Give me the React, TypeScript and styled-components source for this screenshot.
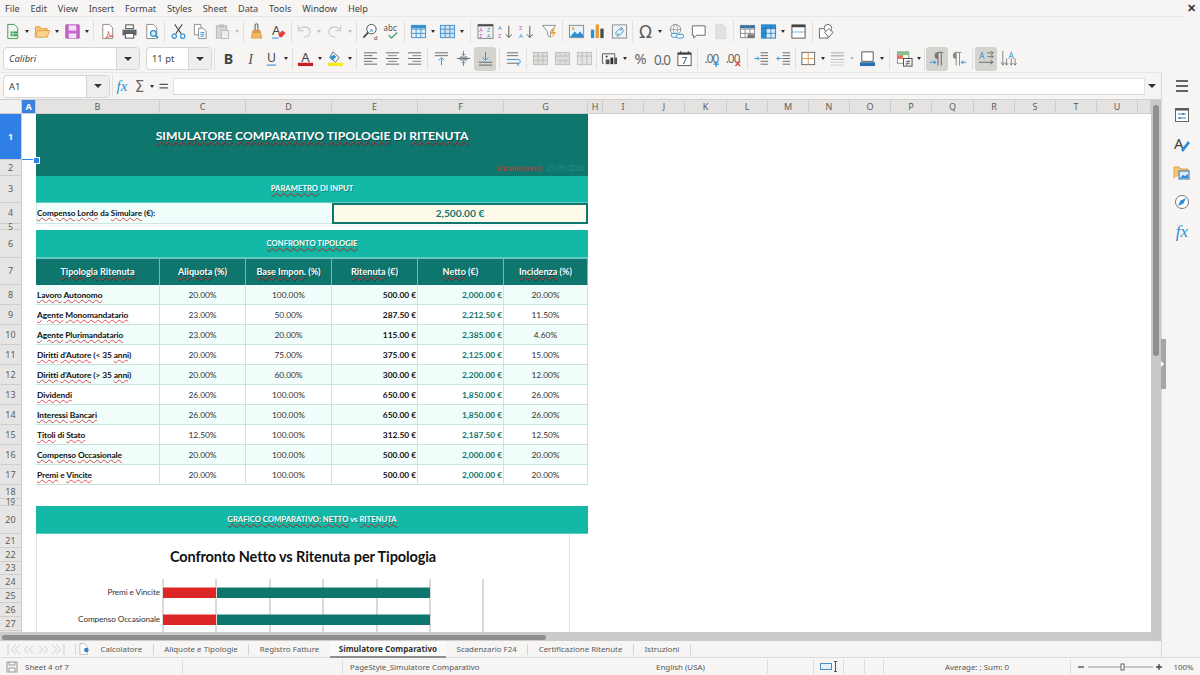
import React from "react";
import styled, { createGlobalStyle } from "styled-components";

const Global = createGlobalStyle`
  html, body { margin: 0; padding: 0; background: #f6f5f4; }
  * { box-sizing: border-box; }
  body { font-family: "Noto Sans", "Open Sans", sans-serif; }
`;

const Page = styled.div`
  width: 1200px; height: 675px; overflow: hidden; position: relative;
  display: flex; flex-direction: column; background: #f6f5f4; color: #3c3c3c;
`;
const MenuBar = styled.div`
  height: 17px; display: flex; align-items: center; padding: 0 5px; gap: 10.8px;
  font-size: 9.2px; color: #444; border-bottom: 1px solid #e9e8e6; margin-right: 16px; position: relative;
`;
const Close = styled.div`
  position: absolute; right: -12px; top: 1px; font-size: 11px; font-weight: 700; color: #333; line-height: 14px;
`;
const Toolbar = styled.div<{ $h: number; $pad: number }>`
  height: ${p => p.$h}px; padding-left: ${p => p.$pad}px; display: flex; align-items: center; flex: none;
`;
const Tool = styled.div<{ $w?: number; $active?: boolean }>`
  width: ${p => p.$w ?? 22}px; height: 24px; flex: none; display: flex; align-items: center; justify-content: center;
  border-radius: 3px; background: ${p => (p.$active ? "#d5d3d0" : "transparent")};
`;
const Drop = styled.div<{ $w?: number; $off?: boolean; $big?: boolean }>`
  width: ${p => p.$w ?? 8}px; flex: none; display: flex; justify-content: center;
  &::after {
    content: ""; border-left: ${p => (p.$big ? 4 : 2.5)}px solid transparent; border-right: ${p => (p.$big ? 4 : 2.5)}px solid transparent;
    border-top: ${p => (p.$big ? 4 : 3)}px solid ${p => (p.$off ? "#bdbdbd" : "#2e2e2e")};
  }
`;
const Sep = styled.div<{ $w?: number }>`
  width: ${p => p.$w ?? 5}px; height: 22px; flex: none; display: flex; justify-content: center;
  &::after { content: ""; width: 1px; background: #e2e1df; }
`;
const Combo = styled.div<{ $w: number; $btn: number; $italic?: boolean; $gap?: number }>`
  width: ${p => p.$w}px; height: 23px; flex: none; margin-right: ${p => p.$gap ?? 0}px;
  display: flex; border: 1px solid #d6d5d3; border-radius: 4px; background: #fff;
  font-size: 9.4px; color: #444; font-style: ${p => (p.$italic ? "italic" : "normal")};
  overflow: hidden;
  & > span { flex: 1; padding-left: 5px; line-height: 21px; }
  & > i {
    width: ${p => p.$btn}px; background: #efeeec; border-left: 1px solid #d6d5d3;
    display: flex; align-items: center; justify-content: center;
  }
  & > i::after {
    content: ""; border-left: 4px solid transparent; border-right: 4px solid transparent; border-top: 4px solid #333;
  }
`;
const Main = styled.div`
  flex: 1; display: flex; min-height: 0;
`;
const Work = styled.div`
  width: 1161px; display: flex; flex-direction: column; min-width: 0; position: relative;
`;
const FormulaBar = styled.div`
  height: 28px; flex: none; padding: 0 0 0 3px; display: flex; align-items: center;
  border-top: 1px solid #e8e7e5; border-bottom: 1px solid #d0cfcd;
`;
const FxInput = styled.div`
  width: 972px; height: 17px; background: #fff; border: 1px solid #e4e3e1; border-bottom-color: #d4d3d1; flex: none;
`;
const ColHeads = styled.div`
  height: 14px; flex: none; display: flex; background: #e4e3e1; border-bottom: 1px solid #cfcecc; margin-right: 10px;
`;
const Corner = styled.div`
  width: 22px; flex: none; background: #f2f1f0; border-right: 1px solid #cfcecc;
`;
const ColHead = styled.div<{ $w: number; $sel?: boolean }>`
  width: ${p => p.$w}px; flex: none; text-align: center; font-size: 9px; line-height: 13px;
  border-right: 1px solid #cfcecc;
  background: ${p => (p.$sel ? "#3b82e0" : "transparent")};
  color: ${p => (p.$sel ? "#fff" : "#5c5c5c")};
  font-weight: ${p => (p.$sel ? 700 : 400)};
`;
const Body = styled.div`
  height: 518px; flex: none; display: flex; overflow: hidden; position: relative; margin-right: 10px;
`;
const RowHeads = styled.div`
  width: 22px; flex: none; background: #e6e5e3; border-right: 1px solid #cfcecc;
`;
const RowHead = styled.div<{ $h: number; $sel?: boolean }>`
  height: ${p => p.$h}px; font-size: ${p => (p.$h < 10 ? 8 : 9)}px; line-height: ${p => p.$h - 1}px; text-align: center;
  border-bottom: 1px solid #d0cfcd;
  background: ${p => (p.$sel ? "#2f7fe6" : "transparent")};
  color: ${p => (p.$sel ? "#fff" : "#5c5c5c")};
  font-weight: ${p => (p.$sel ? 700 : 400)};
`;
const Canvas = styled.div`
  flex: 1; background: #fff; padding-left: 14px; position: relative; min-width: 0;
  font-family: "Lato", "Liberation Sans", sans-serif;
`;
const CellCursor = styled.div`
  position: absolute; left: 0; top: 45px; width: 14px; height: 1px; background: #2f7fe6; z-index: 2;
  &::after {
    content: ""; position: absolute; right: -4px; top: -2px; width: 5px; height: 5px; background: #2f7fe6; border: 1px solid #fff;
  }
`;
const Grid = styled.div`
  width: 552px; display: grid; position: relative;
  grid-template-columns: 124px 86px 86px 86px 86px 84px;
  grid-template-rows: 46px 16px 27px 21px 6px 28px 27px repeat(10, 20px) 14px 7px 28px;
`;
const Title = styled.div`
  grid-column: 1 / -1; background: #0f766e; color: #fff; font-size: 12.2px; font-weight: 700;
  text-align: center; line-height: 43px; text-shadow: 1px 1px 0 rgba(0, 0, 0, 0.35);
`;
const Subtitle = styled.div`
  grid-column: 1 / -1; background: #0f766e; display: flex; justify-content: flex-end; align-items: center;
  gap: 4px; padding-right: 3px; font-size: 7px; color: #2d8d83;
  & > b { color: #9a4a42; font-weight: 700; font-size: 7.4px; }
`;
const Band = styled.div`
  grid-column: 1 / -1; background: #14b8a6; color: #fff; font-size: 7.7px; font-weight: 700;
  text-align: center; display: flex; align-items: center; justify-content: center;
  border-bottom: 1px solid #5fcabd; text-shadow: 1px 1px 0 rgba(0, 0, 0, 0.3);
  padding-bottom: 2px;
`;
const Blank = styled.div`
  grid-column: 1 / -1;
`;
const InputLabel = styled.div`
  grid-column: 1 / 4; background: #f0fdfa; font-size: 8.1px; font-weight: 700; color: #111; padding: 0 0 1px 0;
  display: flex; align-items: center; border-bottom: 1px solid #cfe6e3; border-left: 1px solid #d9ecea;
`;
const InputValue = styled.div`
  grid-column: 4 / -1; background: #fffbeb; border: 2px solid #0f766e; color: #0f766e;
  font-size: 10.2px; font-weight: 700; display: flex; align-items: center; justify-content: center; padding-bottom: 1px;
`;
const Head = styled.div`
  background: #0f766e; color: #fff; font-size: 9.1px; font-weight: 700; display: flex; align-items: center; justify-content: center;
  border-right: 1px solid #7cb6ae; text-shadow: 1px 1px 0 rgba(0, 0, 0, 0.35);
  border-top: 1px solid #5fcabd; padding-bottom: 2px;
`;
const Cell = styled.div<{ $odd: boolean; $align?: string; $tone?: string }>`
  background: ${p => (p.$odd ? "#f0fdfa" : "#fff")};
  border-right: 1px solid #c8e4e0; border-bottom: 1px solid #c8e4e0;
  display: flex; align-items: center; padding: 0 1px 0 1px;
  justify-content: ${p => (p.$align === "right" ? "flex-end" : p.$align === "left" ? "flex-start" : "center")};
  font-size: 8.4px;
  font-weight: ${p => (p.$tone === "strong" || p.$tone === "name" || p.$tone === "teal" ? 700 : 400)};
  color: ${p => (p.$tone === "teal" ? "#0f766e" : p.$tone === "strong" || p.$tone === "name" ? "#111" : "#333")};
  letter-spacing: ${p => (p.$tone === "name" ? "-0.1px" : "0")};
`;
const Wavy = styled.span`
  text-decoration: underline wavy rgba(216, 35, 42, 0.8) 0.7px; text-underline-offset: 0.5px;
`;
const Chart = styled.div`
  position: absolute; left: 0; top: 420px; width: 534px; height: 98px; background: #fff;
  border-left: 1px solid #e3e3e3; border-right: 1px solid #e3e3e3;
`;
const ChartTitle = styled.div`
  font-size: 14.5px; font-weight: 700; color: #111; text-align: center; letter-spacing: -0.1px; padding-top: 14px; line-height: 18px; height: 45px;
`;
const VTrack = styled.div`
  position: absolute; right: 0; top: 28px; bottom: 17px; width: 10px; background: #c9c9c9;
  &::after {
    content: ""; position: absolute; left: 2px; top: 5px; width: 6px; height: 251px; border-radius: 3px; background: #8e8e8e;
  }
`;
const HScroll = styled.div`
  height: 9px; flex: none; background: #cbcbcb; position: relative; margin-right: 10px;
  &::before {
    content: ""; position: absolute; left: 2px; top: 3px; width: 544px; height: 5px; border-radius: 3px; background: #8e8e8e;
  }
`;
const Tabs = styled.div`
  height: 17px; flex: none; display: flex; align-items: center; font-size: 7.9px; color: #555;
  border-bottom: 1px solid #dcdbd9; padding-left: 7px;
`;
const TabNav = styled.div`
  width: 68px; flex: none; display: flex; align-items: center;
`;
const TabSep = styled.div`
  width: 1px; height: 11px; background: #d4d3d1; flex: none;
`;
const NewTab = styled.div`
  width: 11px; margin-left: 3px; flex: none; display: flex; align-items: center;
`;
const Tab = styled.div<{ $active?: boolean }>`
  padding: 0 ${p => (p.$active ? 9 : 10.5)}px; height: 17px; line-height: 16px; flex: none; white-space: nowrap;
  font-weight: ${p => (p.$active ? 700 : 400)};
  font-size: ${p => (p.$active ? 8.1 : 7.9)}px;
  color: ${p => (p.$active ? "#333" : "#5a5a5a")};
  border-bottom: ${p => (p.$active ? "2px solid #8f8f8f" : "none")};
  background: ${p => (p.$active ? "#fbfbfa" : "transparent")};
`;
const Sidebar = styled.div`
  flex: 1; display: flex; flex-direction: column; align-items: center; padding-top: 3px; gap: 8px;
  border-left: 1px solid #d8d7d5; border-bottom: 1px solid #dcdbd9; position: relative;
`;
const SideBtn = styled.div`
  width: 22px; height: 21px; display: flex; align-items: center; justify-content: center;
  padding-left: 1px;
`;
const Grip = styled.div`
  position: absolute; left: -1px; top: 267px; width: 5px; height: 50px; background: #a5a5a5;
  &::after {
    content: ""; position: absolute; left: 0; top: 22px; border-left: 3px solid #fff;
    border-top: 3px solid transparent; border-bottom: 3px solid transparent;
  }
`;
const Status = styled.div`
  height: 17px; flex: none; display: flex; align-items: center; font-size: 7.9px; color: #555;
`;
const StatusCell = styled.div<{ $w: number; $pad?: number; $center?: boolean; $line?: boolean }>`
  width: ${p => p.$w}px; flex: none; height: 14px; display: flex; align-items: center; white-space: nowrap; gap: 3px;
  padding-left: ${p => p.$pad ?? 0}px;
  justify-content: ${p => (p.$center ? "center" : "flex-start")};
  border-right: ${p => (p.$line ? "1px solid #dddcda" : "none")};
`;
const Menu = styled.span``;
const Vector = styled.svg`
  overflow: visible; flex: none;
`;

const BLUE = "#2a8fd6", DK = "#4a4a4a", GR = "#8a8a8a";
const txt = { fontFamily: "Noto Sans, sans-serif" };

const lines = (ys: number[], x1: number, x2: number, c = "#555", alt?: (i: number) => number) =>
  ys.map((y, i) => <path key={y} d={`M${x1} ${y}H${alt ? alt(i) : x2}`} stroke={c} strokeWidth="1" />);

const doc = (c: string, f = "#fff") => <path d="M4 1.5h7l3.5 3.5v11.5H4z" fill={f} stroke={c} />;
const gridIcon = (c: string, f = "#fff", head?: string) => (
  <>
    <rect x="1.5" y="2.5" width="15" height="13" fill={f} stroke={c} />
    {head && <rect x="1.5" y="2.5" width="15" height="3" fill={head} />}
    <path d="M6.5 2.5v13M11.5 2.5v13M1.5 6.5h15M1.5 11h15" stroke={c} strokeWidth="1" />
  </>
);

const icons: Record<string, React.ReactNode> = {
  new: (<>{doc("#3f9a52", "#eef7ef")}<rect x="7" y="9" width="7" height="5" fill="#3f9a52" /><path d="M9.5 9v5M7 11.5h7" stroke="#fff" strokeWidth=".7" /></>),
  open: (<><path d="M1.5 15V4h5l1.5 2h6v2" fill="#f7c877" stroke="#e0a044" /><path d="M1.5 15l2.5-7h12.5L14 15z" fill="#fbd48c" stroke="#e0a044" /></>),
  save: (<><path d="M2 2h14v14H2z" fill="#c766cc" stroke="#a94db0" /><rect x="5" y="2.5" width="8" height="5.5" fill="#f3e0f4" /><rect x="5" y="11" width="8" height="5" fill="#f3e0f4" /></>),
  pdf: (<>{doc(GR)}<path d="M7 16c2-1 3-5 3-7 0 3 2 5 5 5-3 0-6 1-8 2z" fill="none" stroke="#e2574c" /></>),
  print: (<><rect x="5" y="2" width="8" height="4" fill="#fff" stroke={DK} /><path d="M1.5 7h15v6h-15z" fill="#5d6a72" /><rect x="4.5" y="11" width="9" height="5" fill="#fff" stroke={DK} /></>),
  preview: (<>{doc(GR)}<circle cx="11" cy="11" r="3" fill="#dff0fb" stroke={BLUE} strokeWidth="1.3" /><path d="M13 13l3 3" stroke={BLUE} strokeWidth="1.5" /></>),
  cut: (<><path d="M5 1.5l7 10M13 1.5l-7 10" stroke={DK} strokeWidth="1.1" /><circle cx="4.5" cy="14" r="2.3" fill="none" stroke={BLUE} strokeWidth="1.2" /><circle cx="13.5" cy="14" r="2.3" fill="none" stroke={BLUE} strokeWidth="1.2" /></>),
  copy: (<><path d="M2.5 1.5h7v11h-7z" fill="#fff" stroke={GR} /><path d="M7 5.5h5l3 3v8H7z" fill="#fff" stroke={GR} /><path d="M9 10h4M9 12h4M9 14h4" stroke={BLUE} /></>),
  paste: (<><rect x="2.5" y="3" width="11" height="13" fill="#d5d5d3" stroke="#b5b5b3" /><rect x="5.5" y="1.5" width="5" height="3" fill="#bbb" /><rect x="8" y="8" width="7.5" height="8.5" fill="#eee" stroke="#bbb" /></>),
  clone: (<><rect x="7.5" y="1" width="3" height="7" rx="1" fill="none" stroke={DK} /><path d="M5 8h8v2H5z" fill="#e9a84c" stroke="#c8852c" strokeWidth=".6" /><path d="M4.5 10h9l1 6h-11z" fill="#f0b860" stroke="#d48e32" strokeWidth=".7" /></>),
  clear: (<><text x="2" y="13" fontSize="14" fill={DK} style={txt}>A</text><path d="M9 12l4-4 3.5 2.5-4 4.5H10z" fill="#e2403a" /><path d="M2 16h7" stroke={BLUE} /></>),
  undo: (<><path d="M3 7c3-4 11-4 12 2 .5 4-4 6-7 6" fill="none" stroke="#cfcfcd" strokeWidth="1.4" /><path d="M2.5 2.5v5.5h5.5" fill="none" stroke="#cfcfcd" strokeWidth="1.4" /></>),
  redo: (<><path d="M15 7C12 3 4 3 3 9c-.5 4 4 6 7 6" fill="none" stroke="#cfcfcd" strokeWidth="1.4" /><path d="M15.5 2.5v5.5H10" fill="none" stroke="#cfcfcd" strokeWidth="1.4" /></>),
  find: (<><circle cx="10" cy="6.5" r="5" fill="#fff" stroke={DK} /><path d="M6.5 10L1.5 15.5" stroke={DK} strokeWidth="1.8" /><text x="8" y="9" fontSize="6.5" fill={BLUE} style={txt}>a</text><text x="12.5" y="18" fontSize="6.5" fill={DK} style={txt}>d</text></>),
  spell: (<><text x="0.5" y="8.5" fontSize="8.5" fill="#555" style={txt}>abc</text><path d="M6 13l3 3 6-6" fill="none" stroke="#4aa96c" strokeWidth="1.5" /></>),
  table: gridIcon("#4a90c8", "#e3f1fb", "#2a8fd6"),
  cols: gridIcon("#4a90c8", "#cfe6f7"),
  sort: (<><rect x="1" y="1.5" width="16" height="15" fill="#f0f0f0" stroke={GR} /><rect x="1" y="1.5" width="16" height="2" fill={DK} /><text x="2.5" y="9" fontSize="5.4" fill="#b04fc0" style={txt}>A</text><text x="2.5" y="16" fontSize="5.4" fill="#b04fc0" style={txt}>Z</text><text x="10.5" y="9" fontSize="5.4" fill={BLUE} style={txt}>Z</text><text x="10.5" y="16" fontSize="5.4" fill={BLUE} style={txt}>A</text></>),
  asc: (<><text x="1" y="7" fontSize="6.2" fill={BLUE} style={txt}>A</text><text x="1" y="16" fontSize="6.2" fill="#c04fc8" style={txt}>Z</text><path d="M12.5 3v12M9.5 12l3 3.5 3-3.5" fill="none" stroke="#555" /></>),
  desc: (<><text x="1" y="7" fontSize="6.2" fill="#c04fc8" style={txt}>Z</text><text x="1" y="16" fontSize="6.2" fill={BLUE} style={txt}>A</text><path d="M12.5 3v12M9.5 12l3 3.5 3-3.5" fill="none" stroke="#555" /></>),
  filter: (<><path d="M1.5 2.5h14l-5.5 6.5v6l-3-2V9z" fill="#fff" stroke={GR} /><path d="M13 6l-3 5h3l-2 5 5-6.5h-3l2-3.5z" fill="#f0a030" /></>),
  image: (<><rect x="1.5" y="2.5" width="15" height="13" fill="#e8f3fb" stroke={GR} /><circle cx="5.5" cy="6" r="1.4" fill="#f0b040" /><path d="M2 15l5-6 3 3 3-3 3 4v2z" fill={BLUE} /></>),
  chart: (<><rect x="2" y="7" width="3.5" height="9" fill={BLUE} /><rect x="7" y="1.5" width="3.5" height="14.5" fill="#ee9a2e" /><rect x="12" y="6" width="3.5" height="10" fill={DK} /></>),
  pivot: (<><rect x="1.5" y="2" width="15" height="14" fill="#f2f2f2" stroke={GR} /><path d="M5 12c0-3 3-6 7-6M10 4l2 2-2 2M13 7c0 3-3 6-6 6M8 11l-2 2 2 2" fill="none" stroke={BLUE} /></>),
  omega: <text x="9" y="16" fontSize="18" textAnchor="middle" fill="#5c5c5c" style={{ fontFamily: "DejaVu Sans" }}>Ω</text>,
  link: (<><circle cx="8" cy="7" r="5.5" fill="none" stroke={GR} /><path d="M2.5 7h11M8 1.5c-3 3-3 8 0 11M8 1.5c3 3 3 8 0 11" stroke={GR} fill="none" strokeWidth=".7" /><rect x="3.5" y="11" width="7" height="4" rx="2" fill="#fff" stroke={BLUE} /><rect x="9" y="12" width="7.5" height="4" rx="2" fill="#fff" stroke={BLUE} /></>),
  comment: <path d="M2.5 3h13.5v10h-9L4 16v-3H2.5z" fill="#fff" stroke="#666" />,
  hf: (<>{doc("#d8d8d6", "#e2e2e0")}</>),
  printarea: (<>{gridIcon(GR, "#fff", "#2a6fa8")}<path d="M9 12h7v4H9z" fill="#777" /></>),
  freeze: (<><rect x="1.5" y="2" width="15" height="14" fill="#d6ebfa" stroke="#2f7fb8" /><rect x="1.5" y="2" width="5" height="14" fill="#2a8fd6" /><rect x="1.5" y="2" width="15" height="4" fill="#2a8fd6" /><path d="M6.5 2v14M11.5 2v14M1.5 6h15M1.5 11h15" stroke="#1c6ea8" strokeWidth=".7" /></>),
  split: (<><rect x="2" y="2" width="14" height="14" fill="#fff" stroke="#555" /><rect x="2" y="2" width="14" height="2.5" fill="#444" /><path d="M2 9.5h14" stroke={BLUE} strokeDasharray="2 1" /></>),
  shapes: (<><rect x="1.5" y="6" width="9" height="10" fill="#fff" stroke="#666" /><circle cx="10.5" cy="5.5" r="4" fill="#fff" stroke="#666" /><path d="M11.5 6l4.5 4-4.5 5-4.5-5z" fill="#fff" stroke="#666" /></>),
  bold: <text x="9" y="15" fontSize="15" fontWeight="700" textAnchor="middle" fill="#444" style={txt}>B</text>,
  italic: <text x="9" y="15" fontSize="15" fontStyle="italic" textAnchor="middle" fill="#555" style={{ fontFamily: "Liberation Serif" }}>I</text>,
  under: (<><text x="9" y="13" fontSize="13" textAnchor="middle" fill="#444" style={txt}>U</text><path d="M4 16h10" stroke="#6aa8dc" strokeWidth="1.5" /></>),
  fcolor: (<><text x="9" y="12.5" fontSize="14" textAnchor="middle" fill="#444" style={txt}>A</text><rect x="1" y="13.5" width="16" height="3.5" fill="#c5211f" /></>),
  bgcolor: (<><path d="M6 2l7 6-4 5-6-5z" fill="#fff" stroke="#666" /><path d="M3 8l4-3 3 2-4 4z" fill={BLUE} /><rect x="1" y="13.5" width="16" height="3.5" fill="#f5ec1e" /></>),
  left: <>{lines([3, 6, 9, 12, 15], 2, 16, "#666", i => (i % 2 ? 11 : 16))}</>,
  center: <>{lines([3, 6, 9, 12, 15], 2, 16, "#666").map((l, i) => (i % 2 ? <g key={i} transform="translate(9 0) scale(.65 1) translate(-9 0)">{l}</g> : l))}</>,
  right: <>{lines([3, 6, 9, 12, 15], 2, 16, "#666").map((l, i) => (i % 2 ? <g key={i} transform="translate(16 0) scale(.65 1) translate(-16 0)">{l}</g> : l))}</>,
  vtop: (<>{lines([3, 6], 2, 16, "#666")}<path d="M9 16V9M6 11l3-3 3 3" fill="none" stroke={BLUE} /></>),
  vmid: (<><path d="M2 9h14M5 7.5h8M5 10.5h8" stroke="#666" /><path d="M9 1v5M7 4l2 2 2-2M9 17v-5M7 14l2-2 2 2" fill="none" stroke={BLUE} /></>),
  vbot: (<>{lines([13, 16], 2, 16, "#666")}<path d="M9 2v8M6 8l3 3 3-3" fill="none" stroke={BLUE} /></>),
  wrap: (<>{lines([3, 6, 14], 2, 14, "#666")}<path d="M2 10h12c3 0 3 5-1 5M15 13l-2 2 2 2" fill="none" stroke={BLUE} /></>),
  merge: gridIcon("#bdbdbb", "#dededc"),
  merge2: (<><rect x="1.5" y="2.5" width="15" height="13" fill="#dededc" stroke="#bdbdbb" /><path d="M1.5 6.5h15M1.5 11h15M6.5 2.5v4M11.5 2.5v4M6.5 11v4.5M11.5 11v4.5" stroke="#bdbdbb" /></>),
  merge3: (<><rect x="1.5" y="2.5" width="15" height="13" fill="#e4e4e2" stroke="#bdbdbb" /><path d="M6.5 2.5v13M11.5 2.5v13M1.5 6.5h15" stroke="#bdbdbb" /></>),
  numfmt: (<><path d="M3 14H1.5V4h13v4" fill="none" stroke="#555" /><circle cx="6" cy="7" r="1.2" fill="#555" /><rect x="5" y="10" width="4" height="5" fill="#555" /><rect x="10" y="8" width="3" height="7" fill="#333" /><rect x="14" y="8" width="3" height="7" fill="#555" /></>),
  pct: <text x="9" y="15" fontSize="15.5" textAnchor="middle" fill="#666" style={txt}>%</text>,
  num: <text x="9" y="14.5" fontSize="13.5" textAnchor="middle" fill="#666" letterSpacing="-1" style={txt}>0.0</text>,
  date: (<><rect x="2" y="3" width="14" height="13.5" fill="#fff" stroke="#555" /><rect x="2" y="3" width="14" height="2" fill="#444" /><path d="M5 1v3M13 1v3" stroke="#444" /><text x="9" y="15" fontSize="10" textAnchor="middle" fill="#444" style={txt}>7</text></>),
  adddec: (<><text x="9" y="13.5" fontSize="12.5" textAnchor="middle" fill="#666" letterSpacing="-1" style={txt}>.00</text><path d="M11 15h6M14 12v6" stroke={BLUE} strokeWidth="1.3" /></>),
  deldec: (<><text x="8" y="13.5" fontSize="12.5" textAnchor="middle" fill="#666" letterSpacing="-1" style={txt}>.00</text><path d="M11 12l5 5M16 12l-5 5" stroke="#e2403a" strokeWidth="1.3" /></>),
  indent: (<>{lines([3, 6, 9, 12, 15], 8, 16, "#666")}<path d="M1.5 9h5M4.5 7l2 2-2 2" fill="none" stroke={BLUE} /></>),
  outdent: (<>{lines([3, 6, 9, 12, 15], 8, 16, "#666")}<path d="M7 9H2M4 7L2 9l2 2" fill="none" stroke={BLUE} /></>),
  border: (<><rect x="2" y="2.5" width="13.5" height="13" fill="#fff" stroke="#666" /><path d="M8.75 2.5v13M2 9h13.5" stroke="#e39a4a" /></>),
  bstyle: (<><path d="M2 3h14M2 6h14" stroke="#bbb" strokeWidth="1.5" /><path d="M2 10h14" stroke="#bbb" /><path d="M2 13h14M2 16h14" stroke="#bbb" strokeDasharray="2 1" /></>),
  bcolor: (<><rect x="3" y="2" width="12" height="10" fill="#fff" stroke="#555" /><rect x="1" y="13" width="16" height="4" fill="#2a6fb0" /></>),
  cond: (<><rect x="1.5" y="2" width="12" height="12" fill="#fff" stroke="#888" /><rect x="1.5" y="2" width="12" height="3.5" fill="#7fc48e" /><rect x="1.5" y="5.5" width="6" height="4" fill="#e8705f" /><rect x="8" y="9" width="9" height="8" fill="#fff" stroke="#444" /><path d="M10 12h5M10 14.5h5M14 11l-3 5" stroke="#444" strokeWidth=".8" /></>),
  ltr: (<><path d="M9 2.5h6M9.5 2.5v14M13 2.5v14" stroke="#666" fill="none" /><path d="M9.5 2.5a3.5 3.5 0 0 0 0 7" fill="#777" /><path d="M1 13h6M5 11l2 2-2 2" stroke={BLUE} fill="none" /></>),
  rtl: (<><path d="M4 2.5h7M5.5 2.5v14M9 2.5v14" stroke="#888" fill="none" /><path d="M5.5 2.5a3.5 3.5 0 0 0 0 7" fill="#888" /><path d="M16 13h-5M13 11l-2 2 2 2" stroke={BLUE} fill="none" /></>),
  td: (<><text x="1" y="9" fontSize="9" fill={BLUE} style={txt}>A</text><path d="M10 3h6M10 7h6M14 1l2 2-2 2M14 5l2 2-2 2" stroke="#555" fill="none" strokeWidth=".8" /><path d="M1 13h15M13 11l3 2-3 2" fill="none" stroke="#666" /></>),
  vert: (<><text x="9" y="9" fontSize="9" fill={BLUE} style={txt}>A</text><path d="M3 1v15M1 13l2 3 2-3M7 9v7M5.5 14l1.5 2 1.5-2M12 9v7M10.5 14l1.5 2 1.5-2M16 9v7M14.5 14l1.5 2 1.5-2" fill="none" stroke="#666" strokeWidth=".8" /></>),
  sumfx: <text x="8" y="14" fontSize="15" fontStyle="italic" textAnchor="middle" fill={BLUE} style={{ fontFamily: "Liberation Serif" }}>fx</text>,
  sigma: <text x="9" y="15" fontSize="16" textAnchor="middle" fill="#666" style={{ fontFamily: "DejaVu Sans" }}>Σ</text>,
  equal: <path d="M3 6.5h10M3 10.5h10" stroke="#555" strokeWidth="1.5" />,
};

const Icon = ({ n, s = 18 }: { n: string; s?: number }) => (
  <Vector width={s} height={s} viewBox="0 0 18 18">{icons[n]}</Vector>
);

type Item = string | [string, number] | [string, number, boolean];
const renderItems = (items: Item[]) =>
  items.map((it, i) => {
    const [n, w, active] = typeof it === "string" ? [it, undefined, false] : [it[0], it[1], it[2]];
    if (n === "|") return <Sep key={i} $w={w as number | undefined} />;
    if (n === "v") return <Drop key={i} $w={w as number | undefined} />;
    if (n === "x") return <Drop key={i} $w={w as number | undefined} $off />;
    return <Tool key={i} $w={w as number | undefined} $active={!!active}><Icon n={n} s={n === "num" ? 18 : 17} /></Tool>;
  });

const row1: Item[] = [
  "new", "v", "open", "v", "save", "v", ["|", 5], "pdf", "print", "preview", ["|", 5], "cut", "copy", "paste", "x", ["|", 4],
  "clone", ["clear", 23], ["|", 3], "undo", "x", ["redo", 23], ["x", 7], ["|", 6], "find", ["spell", 21], ["|", 5],
  "table", ["v", 7], "cols", "v", ["|", 8], "sort", ["asc", 19], ["desc", 23], "filter", ["|", 5], "image", ["chart", 21], "pivot", ["|", 4],
  "omega", "v", ["link", 24], ["comment", 21], "hf", ["|", 5], "printarea", ["freeze", 21], "v", "split", ["|", 6], "shapes",
];
const row2: Item[] = [
  ["|", 5], "bold", "italic", ["under", 20], ["v", 9], ["|", 5], ["fcolor", 20], ["v", 9], "bgcolor", "v", ["|", 5],
  "left", "center", "right", ["|", 5], "vtop", "vmid", ["vbot", 22, true], ["|", 6], "wrap", ["|", 5], "merge", "merge2", "merge3", ["|", 3],
  "numfmt", ["v", 9], "pct", "num", "date", ["|", 5], "adddec", ["deldec", 23], ["|", 5], "indent", "outdent", ["|", 3],
  "border", "v", ["bstyle", 21], "x", "bcolor", "v", ["|", 7], "cond", "v", ["|", 3], ["ltr", 22, true], "rtl", ["|", 5], ["td", 22, true], "vert",
];

const OK = new Set(["DI", "di", "e", "vs", "INPUT", "(<", "35", "(>", "(%)", "(€)", "(€):", "da"]);
const Sp = ({ t }: { t: string }) => (
  <span>
    {t.split(" ").map((w, i, a) => (
      <React.Fragment key={i}>
        {OK.has(w) ? w : <Wavy>{w}</Wavy>}
        {i < a.length - 1 ? " " : ""}
      </React.Fragment>
    ))}
  </span>
);

const cols: [string, number, boolean?][] = [
  ["A", 14, true], ["B", 124], ["C", 86], ["D", 86], ["E", 86], ["F", 86], ["G", 84], ["H", 15], ["I", 41], ["J", 41], ["K", 42],
  ["L", 41], ["M", 41], ["N", 41], ["O", 41], ["P", 41], ["Q", 42], ["R", 41], ["S", 41], ["T", 41], ["U", 41], ["", 13],
];
const rowHeights = [46, 16, 27, 21, 6, 28, 27, 20, 20, 20, 20, 20, 20, 20, 20, 20, 20, 14, 7, 28, 14, 14, 13, 14, 14, 14, 14];

const data = [
  ["Lavoro Autonomo", "20.00%", "100.00%", "500.00 €", "2,000.00 €", "20.00%"],
  ["Agente Monomandatario", "23.00%", "50.00%", "287.50 €", "2,212.50 €", "11.50%"],
  ["Agente Plurimandatario", "23.00%", "20.00%", "115.00 €", "2,385.00 €", "4.60%"],
  ["Diritti d'Autore (< 35 anni)", "20.00%", "75.00%", "375.00 €", "2,125.00 €", "15.00%"],
  ["Diritti d'Autore (> 35 anni)", "20.00%", "60.00%", "300.00 €", "2,200.00 €", "12.00%"],
  ["Dividendi", "26.00%", "100.00%", "650.00 €", "1,850.00 €", "26.00%"],
  ["Interessi Bancari", "26.00%", "100.00%", "650.00 €", "1,850.00 €", "26.00%"],
  ["Titoli di Stato", "12.50%", "100.00%", "312.50 €", "2,187.50 €", "12.50%"],
  ["Compenso Occasionale", "20.00%", "100.00%", "500.00 €", "2,000.00 €", "20.00%"],
  ["Premi e Vincite", "20.00%", "100.00%", "500.00 €", "2,000.00 €", "20.00%"],
];
const headers = ["Tipologia Ritenuta", "Aliquota (%)", "Base Impon. (%)", "Ritenuta (€)", "Netto (€)", "Incidenza (%)"];
const tabs = ["Calcolatore", "Aliquote e Tipologie", "Registro Fatture", "Simulatore Comparativo", "Scadenzario F24", "Certificazione Ritenute", "Istruzioni"];
const menus = ["File", "Edit", "View", "Insert", "Format", "Styles", "Sheet", "Data", "Tools", "Window", "Help"];

const PlotChart = () => {
  const gx = [126, 179, 233, 286, 340, 393, 446];
  return (
    <svg width="532" height="53" viewBox="0 0 532 53">
      {gx.map(x => <path key={x} d={`M${x} 0V53`} stroke="#b5b5b5" />)}
      {[["Premi e Vincite", 8.5], ["Compenso Occasionale", 35.5]].map(([l, y]) => (
        <g key={l as string}>
          <rect x="126" y={y as number} width="53" height="10.5" fill="#dc2626" />
          <rect x="180" y={y as number} width="213" height="10.5" fill="#0f766e" />
          <text x="123" y={(y as number) + 7} textAnchor="end" fontSize="8.2" fill="#333" letterSpacing="-.1" style={{ fontFamily: "Lato, sans-serif" }}>{l}</text>
        </g>
      ))}
    </svg>
  );
};

const TabNavIcons = () => (
  <svg width="58" height="13" viewBox="0 0 58 13" fill="none" stroke="#d0cfcd">
    <path d="M1 1v11M9 2L4 6.5l5 4.5M13 2L8 6.5l5 4.5M21 3l-4 3.5 4 3.5M26 3l-4 3.5 4 3.5M32 3l4 3.5-4 3.5M37 3l4 3.5-4 3.5M45 2l5 4.5-5 4.5M49 2l5 4.5-5 4.5M57 1v11" />
  </svg>
);

export default function App() {
  return (
    <Page>
      <Global />
      <MenuBar>
        {menus.map(m => <Menu key={m}>{m}</Menu>)}
        <Close>✕</Close>
      </MenuBar>
      <Toolbar $h={28} $pad={1}>{renderItems(row1)}</Toolbar>
      <Toolbar $h={27} $pad={3}>
        <Combo $w={137} $btn={23} $italic $gap={6}><span>Calibri</span><i /></Combo>
        <Combo $w={66} $btn={23}><span>11 pt</span><i /></Combo>
        {renderItems(row2)}
      </Toolbar>
      <Main>
        <Work>
          <FormulaBar>
            <Combo $w={107} $btn={23}><span>A1</span><i /></Combo>
            <Sep $w={5} />
            <Tool $w={16}><Icon n="sumfx" /></Tool>
            <Tool $w={17}><Icon n="sigma" s={17} /></Tool>
            <Drop $w={8} />
            <Tool $w={17}><Icon n="equal" s={15} /></Tool>
            <FxInput />
            <Drop $w={14} $big />
          </FormulaBar>
          <ColHeads>
            <Corner />
            {cols.map(([c, w, s], i) => <ColHead key={i} $w={w} $sel={!!s}>{c}</ColHead>)}
          </ColHeads>
          <Body>
            <RowHeads>
              {rowHeights.map((h, i) => <RowHead key={i} $h={h} $sel={i === 0}>{i + 1}</RowHead>)}
            </RowHeads>
            <Canvas>
              <CellCursor />
              <Grid>
                <Title><Sp t="SIMULATORE COMPARATIVO TIPOLOGIE DI RITENUTA" /></Title>
                <Subtitle><b>datamelano.it</b><span>15/05/2024</span></Subtitle>
                <Band><Sp t="PARAMETRO DI INPUT" /></Band>
                <InputLabel><span><Sp t="Compenso Lordo da Simulare (€):" /></span></InputLabel>
                <InputValue>2,500.00 €</InputValue>
                <Blank />
                <Band><Sp t="CONFRONTO TIPOLOGIE" /></Band>
                {headers.map(h => <Head key={h}><Sp t={h} /></Head>)}
                {data.map((r, i) => (
                  <React.Fragment key={i}>
                    <Cell $odd={i % 2 === 0} $align="left" $tone="name"><Sp t={r[0]} /></Cell>
                    <Cell $odd={i % 2 === 0}>{r[1]}</Cell>
                    <Cell $odd={i % 2 === 0}>{r[2]}</Cell>
                    <Cell $odd={i % 2 === 0} $align="right" $tone="strong">{r[3]}</Cell>
                    <Cell $odd={i % 2 === 0} $align="right" $tone="teal">{r[4]}</Cell>
                    <Cell $odd={i % 2 === 0}>{r[5]}</Cell>
                  </React.Fragment>
                ))}
                <Blank />
                <Blank />
                <Band><Sp t="GRAFICO COMPARATIVO: NETTO vs RITENUTA" /></Band>
                <Chart>
                  <ChartTitle>Confronto Netto vs Ritenuta per Tipologia</ChartTitle>
                  <PlotChart />
                </Chart>
              </Grid>
            </Canvas>
          </Body>
          <VTrack />
          <HScroll />
          <Tabs>
            <TabNav><TabNavIcons /></TabNav>
            <TabSep />
            <NewTab>
              <svg width="11" height="14" viewBox="0 0 12 14">
                <path d="M1 1h5l3 3v9H1z" fill="#fff" stroke="#bbb" />
                <circle cx="8" cy="8" r="2.5" fill="#3a7fc8" />
              </svg>
            </NewTab>
            {tabs.map((t, i) => (
              <React.Fragment key={t}>
                <Tab $active={i === 3}>{t}</Tab>
                {i !== 2 && i !== 3 && <TabSep />}
              </React.Fragment>
            ))}
          </Tabs>
        </Work>
        <Sidebar>
          <Grip />
          <SideBtn>
            <svg width="16" height="16" viewBox="0 0 16 16"><path d="M2 3h12M2 8h12M2 13h12" stroke="#333" strokeWidth="1.5" /></svg>
          </SideBtn>
          <SideBtn>
            <svg width="16" height="16" viewBox="0 0 16 16"><rect x="1.5" y="1.5" width="13" height="13" fill="#fff" stroke="#666" /><rect x="1.5" y="1.5" width="13" height="2" fill="#555" /><path d="M4 7h8M4 11h8" stroke={BLUE} /><path d="M9 6v2M6 10v2" stroke="#444" /></svg>
          </SideBtn>
          <SideBtn>
            <Vector width="18" height="18" viewBox="0 0 18 18"><text x="1" y="14" fontSize="15" fill="#444" style={txt}>A</text><path d="M8 15l7-9 2 2-7 9z" fill={BLUE} /></Vector>
          </SideBtn>
          <SideBtn>
            <svg width="17" height="17" viewBox="0 0 17 17"><path d="M1 14V3h5l1 2h8v3" fill="#f5c675" stroke="#e0a044" /><rect x="6" y="7" width="10" height="8" fill="#dcecf8" stroke="#2a6fa8" /><path d="M7 14l3-3 2 1 3-2v4z" fill={BLUE} /></svg>
          </SideBtn>
          <SideBtn>
            <svg width="16" height="16" viewBox="0 0 16 16"><circle cx="8" cy="8" r="6.5" fill="#fff" stroke="#777" /><path d="M12 4L9.5 9.5 4 12l2.5-5.5z" fill={BLUE} /></svg>
          </SideBtn>
          <SideBtn>
            <Vector width="18" height="18" viewBox="0 0 18 18"><text x="9" y="15" fontSize="17" fontStyle="italic" textAnchor="middle" fill={BLUE} style={{ fontFamily: "Liberation Serif" }}>fx</text></Vector>
          </SideBtn>
        </Sidebar>
      </Main>
      <Status>
        <StatusCell $w={183} $pad={6} $line>
          <svg width="12" height="12" viewBox="0 0 12 12" fill="none" stroke="#999"><path d="M1 1h10v10H1z" /><path d="M3 1v3h6V1M3 11V7h6v4" /></svg>
          <span>&nbsp;&nbsp;Sheet 4 of 7</span>
        </StatusCell>
        <StatusCell $w={160} $line />
        <StatusCell $w={251} $pad={7}>PageStyle_Simulatore Comparativo</StatusCell>
        <StatusCell $w={174} $center $line>English (USA)</StatusCell>
        <StatusCell $w={46} $line />
        <StatusCell $w={30} $center $line>
          <svg width="18" height="11" viewBox="0 0 18 11" fill="none"><rect x="0.5" y="2.5" width="11" height="6" fill="#e3f1fb" stroke="#4a90c8" /><path d="M14 0.5h3M15.5 0.5v10M14 10.5h3" stroke="#555" /></svg>
        </StatusCell>
        <StatusCell $w={21} $line />
        <StatusCell $w={19} $line />
        <StatusCell $w={187} $center $line>Average: ; Sum: 0</StatusCell>
        <StatusCell $w={96} $pad={3}>
          <svg width="90" height="12" viewBox="0 0 90 12"><path d="M4 6h6" stroke="#444" strokeWidth="1.3" /><path d="M14 6h65" stroke="#999" /><rect x="47" y="3" width="3" height="6" fill="#fff" stroke="#666" /><path d="M82 6h6M85 3v6" stroke="#444" strokeWidth="1.3" /></svg>
        </StatusCell>
        <StatusCell $w={33} $center>100%</StatusCell>
      </Status>
    </Page>
  );
}
